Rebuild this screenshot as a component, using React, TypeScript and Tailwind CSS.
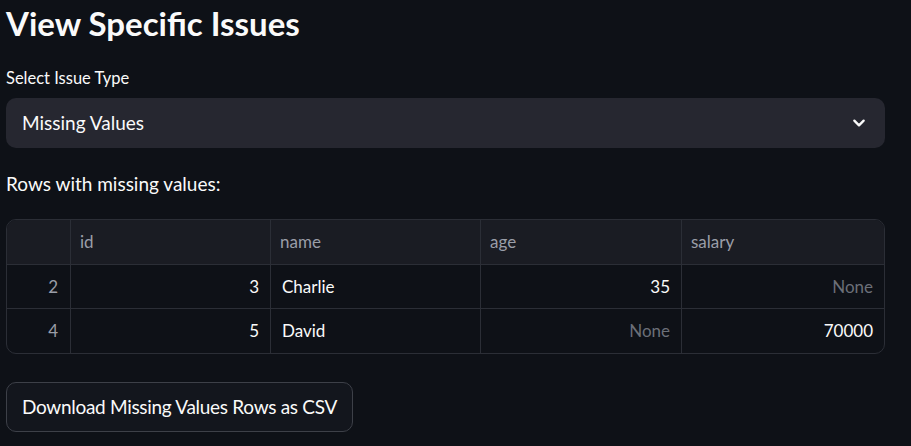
import React from 'react';

const rows = [
  { idx: '2', id: '3', name: 'Charlie', age: '35', salary: null as string | null },
  { idx: '4', id: '5', name: 'David', age: null as string | null, salary: '70000' },
];

const Cell: React.FC<{ value: string | null; align?: 'left' | 'right'; last?: boolean }> = ({ value, align = 'right', last }) => (
  <div
    className={`flex items-center px-[11px] border-r border-[#2b2e36] ${last ? 'border-r-0' : ''} ${
      align === 'right' ? 'justify-end' : 'justify-start'
    } ${value === null ? 'text-[#6b6f78]' : 'text-[#fafafa]'}`}
  >
    {value === null ? 'None' : value}
  </div>
);

const App: React.FC = () => {
  return (
    <div className="min-h-[446px] w-[911px] bg-[#0e1117] text-[#fafafa] px-[6px]" style={{ fontFamily: 'Lato, "Noto Sans", sans-serif' }}>
      <h1 className="text-[33px] font-bold leading-[44px] pt-[1px]">View Specific Issues</h1>

      <div className="mt-[22px] text-[16.5px] leading-[22px]">Select Issue Type</div>
      <div className="mt-[9px] h-[50px] w-[879px] rounded-[10px] bg-[#262730] flex items-center justify-between pl-[16px] pr-[18px]">
        <span className="text-[19px]">Missing Values</span>
        <svg width="16" height="16" viewBox="0 0 24 24" fill="none" stroke="#fafafa" strokeWidth="3.5" strokeLinecap="round" strokeLinejoin="round">
          <path d="M5 8.5l7 7 7-7" />
        </svg>
      </div>

      <p className="mt-[22px] text-[19px] leading-[28px]">Rows with missing values:</p>

      <div className="mt-[21px] w-[879px] rounded-[10px] border border-[#2b2e36] overflow-hidden text-[17px]">
        <div className="grid grid-cols-[64px_200px_210px_201px_1fr] h-[45px] bg-[#1a1c23] border-b border-[#2b2e36] text-[#9a9ea8]">
          <div className="border-r border-[#2b2e36]" />
          <div className="flex items-center px-[9px] border-r border-[#2b2e36]">id</div>
          <div className="flex items-center px-[9px] border-r border-[#2b2e36]">name</div>
          <div className="flex items-center px-[9px] border-r border-[#2b2e36]">age</div>
          <div className="flex items-center px-[9px]">salary</div>
        </div>
        {rows.map((r, i) => (
          <div
            key={r.idx}
            className={`grid grid-cols-[64px_200px_210px_201px_1fr] h-[44px] ${i === 0 ? 'border-b border-[#2b2e36]' : ''}`}
          >
            <div className="flex items-center justify-end px-[12px] border-r border-[#2b2e36] text-[#9a9ea8]">{r.idx}</div>
            <Cell value={r.id} />
            <Cell value={r.name} align="left" />
            <Cell value={r.age} />
            <Cell value={r.salary} last />
          </div>
        ))}
      </div>

      <button className="mt-[28px] h-[50px] px-[15px] rounded-[10px] border border-[#3d4048] bg-[#13161d] text-[19px] tracking-[-0.3px] text-[#fafafa]">
        Download Missing Values Rows as CSV
      </button>
    </div>
  );
};

export default App;
